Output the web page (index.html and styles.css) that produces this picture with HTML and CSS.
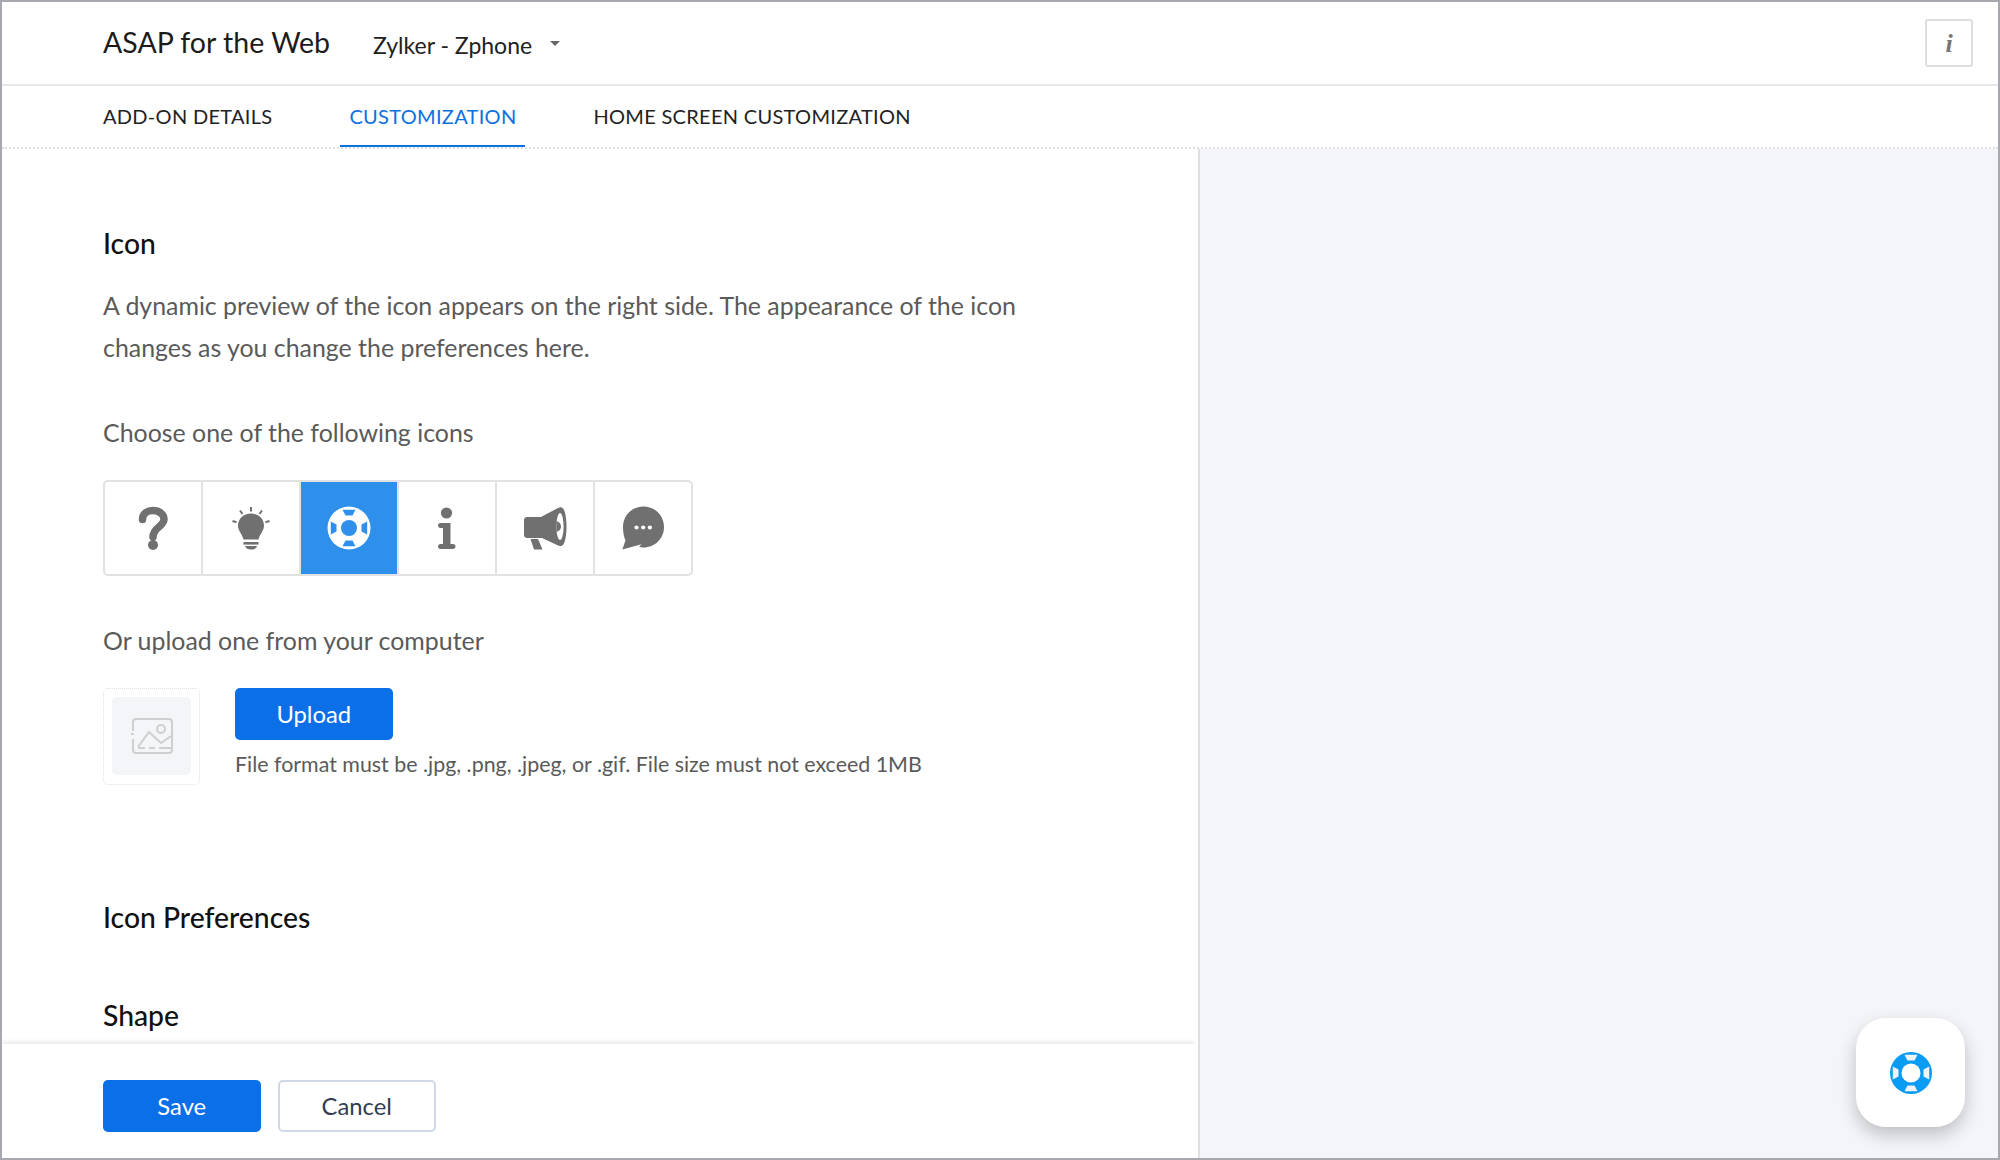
FILE: index.html
```html
<!DOCTYPE html>
<html lang="en">
<head>
<meta charset="utf-8">
<title>ASAP for the Web</title>
<link rel="stylesheet" href="styles.css">
</head>
<body>
<div class="frame">
  <header class="topbar">
    <h1 class="app-title">ASAP for the Web</h1>
    <div class="dept">Zylker - Zphone<span class="caret"></span></div>
    <button class="info-btn">i</button>
  </header>
  <nav class="tabs">
    <a class="tab">ADD-ON DETAILS</a>
    <a class="tab active">CUSTOMIZATION</a>
    <a class="tab">HOME SCREEN CUSTOMIZATION</a>
  </nav>
  <div class="workspace">
    <section class="editor">
      <div class="editor-scroll">
        <h2 class="section-title">Icon</h2>
        <p class="desc">A dynamic preview of the icon appears on the right side. The appearance of the icon changes as you change the preferences here.</p>
        <p class="label choose">Choose one of the following icons</p>
        <div class="icon-picker">
          <div class="cell">
            <svg class="ico" viewBox="0 0 60 60"><path d="M19.500 21.500C19.500 15 25 12.500 30 12.500C36 12.500 41 16 41 21C41 29 30 29 30 39" fill="none" stroke="#707070" stroke-width="7.500" stroke-linecap="round"/><circle cx="30" cy="47" r="5" fill="#707070"/></svg>
          </div>
          <div class="cell">
            <svg class="ico" viewBox="0 0 60 60"><g fill="#707070"><path d="M30 15.500C37.500 15.500 43 21 43 27.500C43 33 39 35.500 37.500 41.500H22.500C21 35.500 17 33 17 27.500C17 21 22.500 15.500 30 15.500Z"/><rect x="22.500" y="44" width="15" height="2.600"/><path d="M24 48H36C35.500 50.500 33 51.500 30 51.500C27 51.500 24.500 50.500 24 48Z"/></g><g stroke="#707070" stroke-width="2" fill="none"><path d="M30 9V13.500M19 12.500L21.500 16M41 12.500L38.500 16M11.500 23L15.500 24.200M48.500 23L44.500 24.200"/></g></svg>
          </div>
          <div class="cell selected">
            <svg class="ico" viewBox="0 0 60 60"><circle cx="30" cy="30" r="21.500" fill="#fff"/><circle cx="30" cy="30" r="8" fill="#2e90ea"/><path fill="#2e90ea" d="M23.500 11.800H36.500L33.500 17.500H26.500ZM23.500 48.200H36.500L33.500 42.500H26.500ZM11.800 23.500V36.500L17.500 33.500V26.500ZM48.200 23.500V36.500L42.500 33.500V26.500Z"/></svg>
          </div>
          <div class="cell">
            <svg class="ico" viewBox="0 0 60 60"><g fill="#707070"><circle cx="29.500" cy="15" r="5.600"/><path d="M23.500 25H33.500V46H36C37.500 46 38.500 47 38.500 48.500C38.500 50 37.500 51 36 51H23.500C22 51 21 50 21 48.500C21 47 22 46 23.500 46H26V30H23.500C22 30 21 29 21 27.500C21 26 22 25 23.500 25Z"/></g></svg>
          </div>
          <div class="cell">
            <svg class="ico" viewBox="0 0 60 60"><path fill="#707070" d="M12 19H26L41 11C43 9.800 45 9.300 46 9.300C49.500 9.300 51.500 18 51.500 28.800C51.500 39.500 49.500 48 46 48C44.500 48 43 47.500 41 46.500L27 40H12C10 40 9 38.500 9 37V22C9 20.500 10 19 12 19Z"/><path fill="#707070" d="M15.500 41H23L27.500 51.500H19Z"/><ellipse cx="45" cy="28.500" rx="3.600" ry="13.500" fill="#fff"/><path fill="#707070" d="M41.500 23C44.500 24 46 26 46 28.500C46 31 44.500 33 41.500 34Z"/></svg>
          </div>
          <div class="cell">
            <svg class="ico" viewBox="0 0 60 60"><path fill="#707070" d="M30.500 8.500C42 8.500 51 17.500 51 29C51 40.500 42 49.500 30.500 49.500C28.500 49.500 27.500 49.300 26 48.800L28.500 46.300L9.300 51.500L12.500 42.500C10.800 39 10 34 10 29C10 17.500 19 8.500 30.500 8.500Z"/><g fill="#fff"><circle cx="23.500" cy="29.500" r="2.100"/><circle cx="30.200" cy="29.500" r="2.100"/><circle cx="36.900" cy="29.500" r="2.100"/></g></svg>
          </div>
        </div>
        <p class="label upload-label">Or upload one from your computer</p>
        <div class="upload-row">
          <div class="thumb">
            <div class="thumb-inner">
              <svg class="img-ico" viewBox="0 0 44 38"><g fill="none" stroke="#cfcfcf" stroke-width="2"><path d="M3 14V5C3 3 4 2 6 2H39C41 2 42 3 42 5V33C42 35 41 36 39 36H6C4 36 3 35 3 33V22"/><path d="M1 17H4"/><path d="M8 30L19 15L31 26L41 19"/><path d="M8 31H15M19 31H25M29 31H41"/><circle cx="31" cy="12" r="4"/></g></svg>
            </div>
          </div>
          <div class="upload-side">
            <button class="btn primary">Upload</button>
            <p class="hint">File format must be .jpg, .png, .jpeg, or .gif. File size must not exceed 1MB</p>
          </div>
        </div>
        <h2 class="section-title prefs">Icon Preferences</h2>
        <h2 class="section-title shape">Shape</h2>
      </div>
      <footer class="actions">
        <button class="btn primary">Save</button>
        <button class="btn ghost">Cancel</button>
      </footer>
    </section>
    <aside class="preview"></aside>
  </div>
  <div class="launcher">
    <svg class="launcher-ico" viewBox="0 0 44 44"><circle cx="22" cy="22" r="21" fill="#0a9bf5"/><circle cx="22" cy="22" r="9.500" fill="#fff"/><path fill="#f1f3f8" d="M15.500 3.800H28.500L25.500 9.500H18.500ZM15.500 40.200H28.500L25.500 34.500H18.500ZM3.800 15.500V28.500L9.500 25.500V18.500ZM40.200 15.500V28.500L34.500 25.500V18.500Z"/></svg>
  </div>
</div>
</body>
</html>
```

FILE: styles.css
```css
* { box-sizing: border-box; }
html, body { margin: 0; padding: 0; }
body { font-family: Lato, "Noto Sans", sans-serif; color: #222; background: #fff; }
.frame {
  position: relative;
  width: 2000px;
  height: 1160px;
  display: flex;
  flex-direction: column;
  border: 2px solid #a6aaae;
  overflow: hidden;
  background: #fff;
}
.topbar {
  flex: 0 0 84px;
  display: flex;
  align-items: center;
  padding: 0 25px 0 101px;
  border-bottom: 2px solid #e8e8e8;
}
.app-title { margin: 0 0 2px; font-size: 28.500px; font-weight: 400; color: #1c1c1c; }
.dept { margin-left: 43px; font-size: 23px; color: #222; display: flex; align-items: center; padding-top: 3px; }
.caret {
  width: 0; height: 0;
  margin-left: 18px;
  margin-top: -2px;
  border-left: 5px solid transparent;
  border-right: 5px solid transparent;
  border-top: 5px solid #666;
}
.info-btn {
  margin-left: auto;
  width: 48px; height: 48px;
  background: #fff;
  border: 2px solid #dedede;
  border-radius: 3px;
  font-family: "Liberation Serif", serif;
  font-style: italic;
  font-weight: 700;
  font-size: 26px;
  color: #777;
  padding: 2px 0 0;
}
.tabs {
  flex: 0 0 62px;
  display: flex;
  gap: 77px;
  padding: 0 0 0 101px;
  border-bottom: 2px dotted #e0e0e0;
}
.tab {
  position: relative;
  font-size: 20px;
  letter-spacing: 0.300px;
  line-height: 60px;
  color: #222;
}
.tab.active {
  color: #0b70e0;
  margin: 0 -9px;
  padding: 0 9px;
  height: 61px;
  border-bottom: 2px solid #0b70e0;
}
.workspace { flex: 1; display: flex; min-height: 0; }
.editor {
  flex: 0 0 1198px;
  display: flex;
  flex-direction: column;
  border-right: 2px solid #dfdfdf;
  min-height: 0;
}
.editor-scroll { flex: 1; padding: 76px 101px 0; overflow: hidden; min-height: 0; }
.section-title { margin: 0; font-size: 28.300px; font-weight: 500; line-height: 36px; color: #111; }
.desc { margin: 23px 0 0; width: 930px; font-size: 24.900px; line-height: 42px; color: #5a5a5a; }
.label { margin: 0; font-size: 24.900px; line-height: 32px; color: #5a5a5a; }
.choose { margin-top: 48px; }
.icon-picker {
  display: flex;
  width: 590px;
  height: 96px;
  margin-top: 32px;
  border: 2px solid #e2e2e2;
  border-radius: 5px;
  overflow: hidden;
}
.cell {
  flex: 1;
  display: flex;
  align-items: center;
  justify-content: center;
  border-right: 2px solid #e2e2e2;
}
.cell:last-child { border-right: 0; }
.cell.selected { background: #2e90ea; }
.ico { width: 60px; height: 60px; display: block; }
.upload-label { margin-top: 48px; }
.upload-row { display: flex; gap: 35px; margin-top: 32px; }
.thumb {
  width: 97px; height: 97px;
  padding: 8px 8px 9px;
  border: 1px dotted #dcdfe8;
  border-radius: 5px;
}
.thumb-inner {
  height: 100%;
  background: #f4f5f9;
  border-radius: 5px;
  display: flex;
  align-items: center;
  justify-content: center;
}
.img-ico { width: 44px; height: 38px; display: block; }
.btn {
  width: 157.500px; height: 52px;
  border-radius: 5px;
  font-family: Lato, sans-serif;
  font-size: 23.800px;
  padding: 0;
  display: block;
}
.primary { background: #0b70e8; border: 0; color: #fff; }
.ghost { background: #fff; border: 2px solid #cfd9e6; color: #333d4f; }
.hint { margin: 11px 0 0; font-size: 21.400px; line-height: 26px; color: #5a5a5a; }
.prefs { margin-top: 114px; }
.shape { margin-top: 62px; }
.actions {
  flex: 0 0 114px;
  display: flex;
  gap: 17.500px;
  padding: 36px 0 0 101px;
  margin-right: 3px;
  box-shadow: 0 -2px 5px rgba(0, 0, 0, .1);
  clip-path: inset(-10px 0 0 0);
  position: relative;
  background: #fff;
}
.preview { flex: 1; background: #f4f5f9; }
.launcher {
  position: absolute;
  left: 1854px;
  top: 1016px;
  width: 109px; height: 109px;
  border-radius: 30px;
  background: #fff;
  box-shadow: 0 8px 18px rgba(0, 0, 0, .22);
  display: flex;
  align-items: center;
  justify-content: center;
}
.launcher-ico { width: 44px; height: 44px; display: block; }
```
